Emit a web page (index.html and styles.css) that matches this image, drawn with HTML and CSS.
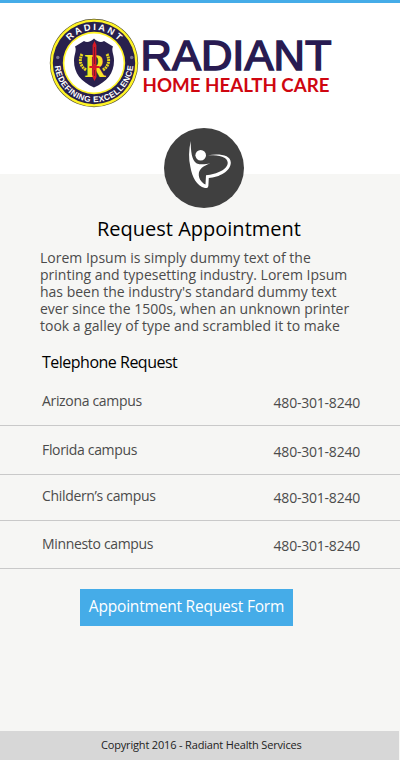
FILE: index.html
```html
<!DOCTYPE html>
<html lang="en">
<head>
<meta charset="utf-8">
<title>Radiant Home Health Care</title>
<link rel="stylesheet" href="styles.css">
</head>
<body>
<header class="header">
  <svg class="logo" width="300" height="92" viewBox="49 17 300 92" role="img" aria-label="Radiant Home Health Care">
    <defs>
      <path id="arc-top" d="M61 63a33 33 0 0 1 66 0"/>
      <path id="arc-bottom" d="M54.800 63a39.200 39.200 0 0 0 78.400 0"/>
    </defs>
    <circle cx="94" cy="63" r="44.200" fill="#55502f"/>
    <circle cx="94" cy="63" r="43.600" fill="#fff426"/>
    <circle cx="94" cy="63" r="41.200" fill="#28204d"/>
    <circle cx="94" cy="63" r="31.200" fill="#fff426"/>
    <circle cx="94" cy="63" r="29.600" fill="#fff"/>
    <circle cx="57.800" cy="57.500" r="1.700" fill="#77748f"/>
    <circle cx="131.700" cy="57.500" r="1.700" fill="#77748f"/>
    <text class="ring-text"><textPath href="#arc-top" startOffset="50%" text-anchor="middle" textLength="55">RADIANT</textPath></text>
    <text class="ring-text ring-text-small"><textPath href="#arc-bottom" startOffset="50%" text-anchor="middle" textLength="117">REDEFINING EXCELLENCE</textPath></text>
    <path d="M94 38.500c-3 3-7 4.500-10 2.500L75 46.500c2 4-1 8-1 14 0 13 7 21 20 27 13-6 20-14 20-27 0-6-3-10-1-14L104 41C101 43 97 41.500 94 38.500z" fill="#28204d"/>
    <g fill="none" stroke="#e5d51e" stroke-width="3" stroke-dasharray="2 .7">
      <path d="M82 54c-3 6-2 12 4 16"/>
      <path d="M107 54c3 6 2 12-4 16"/>
    </g>
    <text class="shield-letter" x="84.500" y="77" textLength="21" lengthAdjust="spacingAndGlyphs">R</text>
    <path d="M94.500 41l1.900 4v21h3.200v2h-3.100v9l-2 4-2-4v-9h-3.100v-2h3.200V45z" fill="#d71b27"/>
    <path d="M94.500 47v17M94.500 70v6" stroke="#651b29" stroke-width=".8"/>
    <text class="brand" x="140.500" y="69.500" textLength="191" lengthAdjust="spacingAndGlyphs">RADIANT</text>
    <text class="tagline" x="142.500" y="92" textLength="187" lengthAdjust="spacingAndGlyphs">HOME HEALTH CARE</text>
  </svg>
</header>
<main class="main">
  <svg class="emblem" width="80" height="80" viewBox="0 0 80 80" aria-hidden="true">
    <circle cx="40" cy="40" r="40" fill="#404040"/>
    <circle cx="36.700" cy="27.300" r="5.300" fill="#fff"/>
    <path d="M26.700 13C24.700 22 24.500 31 26.400 39C28.200 49 32.500 58 41 60C43 60.400 44.400 59.500 44.400 57.500L44.800 50C55 49.500 67 43 66.800 34.500C66.500 27 56 25.500 44 27.200C54 27 63.500 28.500 63.700 34.500C64 41 53 46.500 42 47.200L41.500 56.500C37 54.500 34.500 50 34.800 46C35 41 39 38 46.500 35.200C41 36.500 36.500 36.800 32.800 35.500C27.500 32 26.800 23 26.700 13Z" fill="#fff"/>
  </svg>
  <h1 class="title">Request Appointment</h1>
  <p class="intro">
    <span class="line">Lorem Ipsum is simply dummy text of the</span>
    <span class="line">printing and typesetting industry. Lorem Ipsum</span>
    <span class="line">has been the industry's standard dummy text</span>
    <span class="line">ever since the 1500s, when an unknown printer</span>
    <span class="line">took a galley of type and scrambled it to make</span>
  </p>
  <h2 class="subtitle">Telephone Request</h2>
  <ul class="campuses">
    <li class="campus"><span class="name">Arizona campus</span><span class="phone">480-301-8240</span></li>
    <li class="campus"><span class="name">Florida campus</span><span class="phone">480-301-8240</span></li>
    <li class="campus campus-short"><span class="name">Childern’s campus</span><span class="phone">480-301-8240</span></li>
    <li class="campus campus-last"><span class="name">Minnesto campus</span><span class="phone">480-301-8240</span></li>
  </ul>
  <a class="button" href="#">Appointment Request Form</a>
</main>
<footer class="footer">Copyright 2016 - Radiant Health Services</footer>
</body>
</html>
```

FILE: styles.css
```css
* { box-sizing: border-box; }
body {
  margin: 0;
  height: 760px;
  display: flex;
  flex-direction: column;
  background: #f6f6f4;
  font-family: "Open Sans", "Noto Sans", sans-serif;
  color: #4b4b4b;
}
.header {
  height: 174px;
  flex: none;
  border-top: 3px solid #45ace8;
  background: #fff;
  padding: 14px 0 0 49px;
}
.logo { display: block; }
.ring-text { font: bold 9.2px "Liberation Sans", sans-serif; fill: #fff; }
.ring-text-small { font-size: 8.2px; }
.shield-letter { font: bold 34px "Liberation Serif", serif; fill: #f6e524; }
.brand {
  font: 42.5px "Liberation Sans", sans-serif;
  fill: #281b52;
  stroke: #281b52;
  stroke-width: 1.5px;
}
.tagline { font: bold 18.6px Lato, sans-serif; fill: #cf0610; }
.main {
  flex: 1;
  display: flex;
  flex-direction: column;
}
.emblem { display: block; flex: none; margin: -46px 0 0 164px; }
.title {
  margin: 7px 0 0 97px;
  font-size: 20px;
  line-height: 28px;
  font-weight: 400;
  color: #000;
  white-space: nowrap;
}
.intro { margin: 6px 0 0 40px; font-size: 14px; line-height: 17px; }
.line { display: block; white-space: nowrap; }
.subtitle {
  margin: 17px 0 0 42px;
  font-size: 16px;
  line-height: 22px;
  font-weight: 400;
  letter-spacing: -0.5px;
  color: #000;
}
.campuses { list-style: none; margin: 4px 0 0; padding: 0; }
.campus {
  height: 49px;
  display: flex;
  justify-content: space-between;
  padding: 14px 40px 0 42px;
  border-bottom: 1px solid #c9c9c9;
  font-size: 14px;
  line-height: 20px;
  letter-spacing: -0.33px;
}
.campus-short { height: 46px; padding-top: 11px; }
.campus-last { height: 48px; padding-top: 13px; }
.phone { padding-top: 2px; letter-spacing: -0.22px; }
.button {
  width: 213px;
  height: 37px;
  margin: 20px 0 0 80px;
  background: #45ace8;
  color: #fff;
  font-size: 15.5px;
  font-weight: 500;
  line-height: 35px;
  text-align: center;
  text-decoration: none;
  white-space: nowrap;
  letter-spacing: -0.2px;
}
.footer {
  height: 29px;
  flex: none;
  margin-right: 1px;
  padding-left: 101px;
  background: #d7d7d7;
  color: #222;
  font-size: 11px;
  line-height: 28px;
  letter-spacing: -0.17px;
  white-space: nowrap;
}
```
